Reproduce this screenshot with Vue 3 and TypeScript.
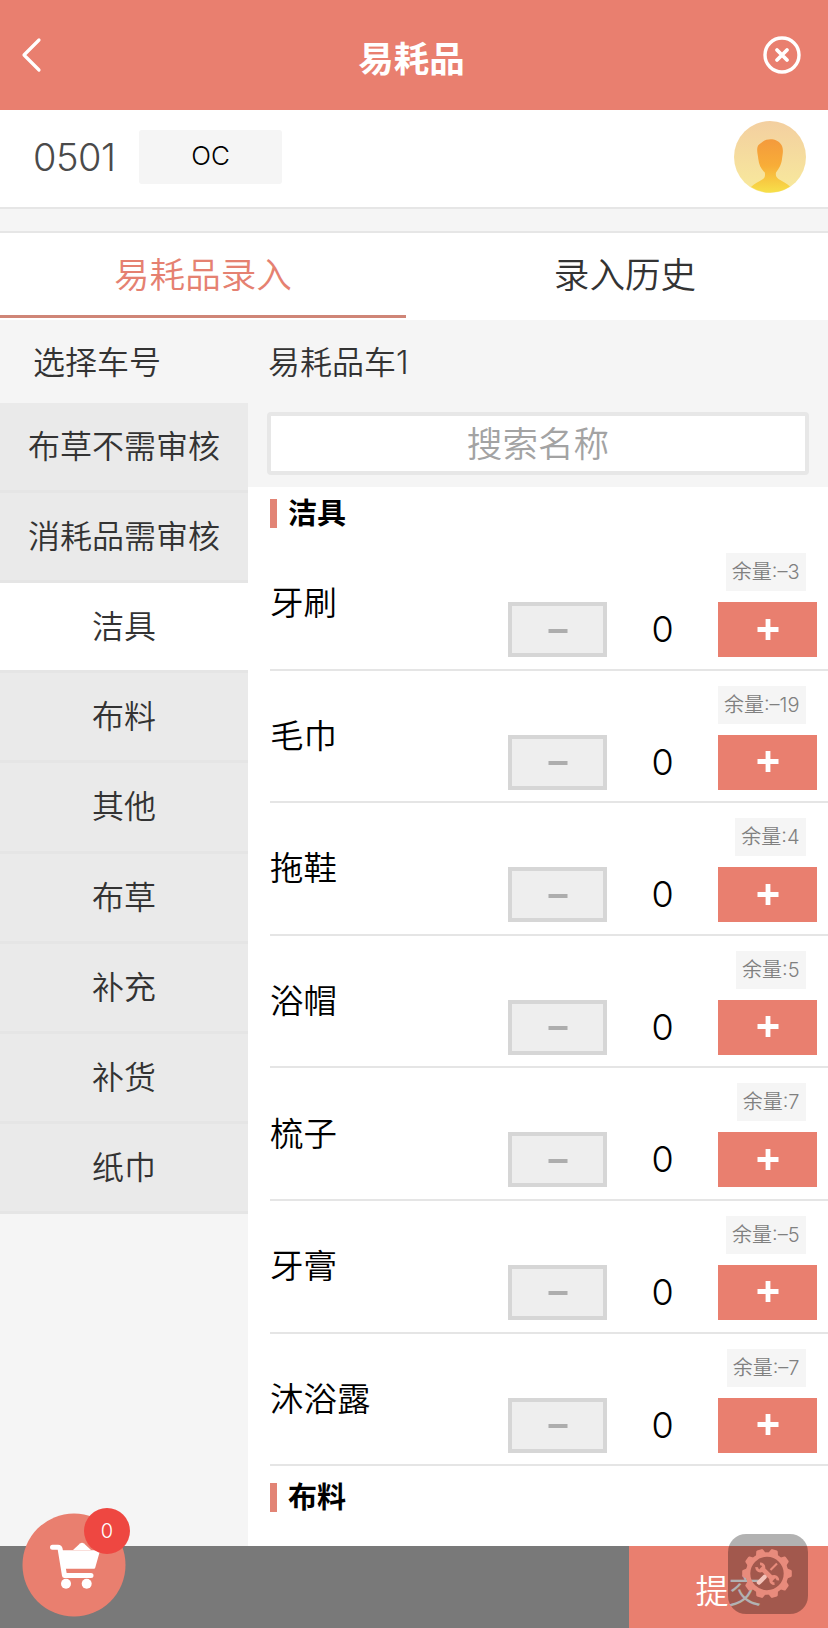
<script setup lang="ts">
import { ref } from 'vue'

interface Item {
  name: string
  stock: string
  count: number
}

const categories = ['布草不需审核', '消耗品需审核', '洁具', '布料', '其他', '布草', '补充', '补货', '纸巾']
const activeCategory = ref('洁具')
const keyword = ref('')
const items = ref<Item[]>([
  { name: '牙刷', stock: '–3', count: 0 },
  { name: '毛巾', stock: '–19', count: 0 },
  { name: '拖鞋', stock: '4', count: 0 },
  { name: '浴帽', stock: '5', count: 0 },
  { name: '梳子', stock: '7', count: 0 },
  { name: '牙膏', stock: '–5', count: 0 },
  { name: '沐浴露', stock: '–7', count: 0 },
])
const teeth = Array.from({ length: 10 }, (_, i) => 18 + i * 36)
</script>

<template>
  <div class="page">
    <header class="header">
      <svg class="back" width="24" height="40" viewBox="0 0 24 40">
        <path d="M20 5 5 20l15 15" fill="none" stroke="#fff" stroke-width="3.2" stroke-linecap="round" stroke-linejoin="round" />
      </svg>
      <h1 class="title">易耗品</h1>
      <svg class="close" width="40" height="40" viewBox="0 0 40 40">
        <circle cx="20" cy="20" r="17" fill="none" stroke="#fff" stroke-width="3.4" />
        <path d="m15 15 10 10M25 15 15 25" stroke="#fff" stroke-width="3.8" stroke-linecap="round" />
      </svg>
    </header>

    <section class="room">
      <span class="room-no">0501</span>
      <span class="room-state">OC</span>
      <svg class="avatar" width="72" height="72" viewBox="0 0 72 72">
        <defs>
          <linearGradient id="avatarBg" x1="0" y1="0" x2="0" y2="1">
            <stop offset="0" stop-color="#f3cfa0" />
            <stop offset="1" stop-color="#f8ea9c" />
          </linearGradient>
          <linearGradient id="avatarFg" x1="0" y1="0" x2="0" y2="1">
            <stop offset="0" stop-color="#f49a3c" />
            <stop offset="0.5" stop-color="#f8ad38" />
            <stop offset="1" stop-color="#f7e04a" />
          </linearGradient>
        </defs>
        <circle cx="36" cy="36" r="36" fill="url(#avatarBg)" />
        <path d="M23.500 26C24 23.500 27 22.500 29 20.500c5-4 15-3 18.500 3.500C50 29 48.500 33 48 38c-.7 6-3 9.500-6 13.500-.5 3 0 4.500 2.500 6.500 4 2.500 8 4 11.500 7.600a36 36 0 0 1-39 .4c3-3.500 8-5 12-8 2-1.500 2.300-3.500 1.800-6.500C27 48 25 44 24.300 38 24 34 22.500 30 23.500 26Z" fill="url(#avatarFg)" />
      </svg>
    </section>

    <nav class="tabs">
      <div class="tab active">易耗品录入</div>
      <div class="tab">录入历史</div>
    </nav>

    <div class="cart-row">
      <span class="cart-label">选择车号</span>
      <span class="cart-name">易耗品车1</span>
    </div>

    <div class="body">
      <aside class="side">
        <div v-for="c in categories" :key="c" class="cat" :class="{ on: c === activeCategory }" @click="activeCategory = c">{{ c }}</div>
      </aside>
      <main class="main">
        <div class="search">
          <input v-model="keyword" class="search-input" placeholder="搜索名称" />
        </div>
        <div class="list">
          <h2 class="group"><span>洁具</span></h2>
          <div v-for="item in items" :key="item.name" class="row">
            <span class="name">{{ item.name }}</span>
            <div class="controls">
              <span class="stock">余量:{{ item.stock }}</span>
              <div class="stepper">
                <button class="btn minus" @click="item.count = Math.max(0, item.count - 1)">
                  <svg width="20" height="20" viewBox="0 0 20 20"><path d="M.5 11h19" stroke="#adadad" stroke-width="4" /></svg>
                </button>
                <span class="count">{{ item.count }}</span>
                <button class="btn plus" @click="item.count++">
                  <svg width="22" height="22" viewBox="0 0 22 22"><path d="M.5 10.500h21M11 0v21" stroke="#fff" stroke-width="4.800" /></svg>
                </button>
              </div>
            </div>
          </div>
          <h2 class="group next"><span>布料</span></h2>
        </div>
      </main>
    </div>

    <footer class="footer">
      <button class="submit">提交</button>
      <div class="cart">
        <svg width="104" height="104" viewBox="0 0 104 104">
          <circle cx="52" cy="52" r="51.500" fill="#e97f6f" />
          <g fill="#fff">
            <path d="M51 37 58 30.500q2-1.500 4 0L69 37Z" />
            <path d="M38 38.500h38.500L72 54.500H41.500Z" stroke="#fff" stroke-width="2.500" stroke-linejoin="round" />
            <circle cx="44" cy="70.800" r="5" />
            <circle cx="64.700" cy="70.800" r="5" />
          </g>
          <path d="M30.500 34.300h5.500q1.800 0 2.200 2L42.500 62.500H69" fill="none" stroke="#fff" stroke-width="5" stroke-linecap="round" stroke-linejoin="round" />
        </svg>
        <span class="badge">0</span>
      </div>
      <div class="tool">
        <svg width="80" height="80" viewBox="0 0 80 80">
          <g fill="#e88b7c">
            <path v-for="a in teeth" :key="a" d="M33.500 20.500 35.500 15.500q.3-.8 1.200-.8h4.600q.9 0 1.200.8L44.500 20.500Z" :transform="`rotate(${a} 39 39.500)`" />
          </g>
          <circle cx="39" cy="39.500" r="19" fill="none" stroke="#e88b7c" stroke-width="4.600" />
          <path d="m33 33.500 12.500 12.500" stroke="#e88b7c" stroke-width="4.600" />
          <g fill="none" stroke="#e88b7c" stroke-width="2.800">
            <path d="M32 29.800a3.600 3.600 0 1 1-3.300 3.300" />
            <path d="M46.500 49.700a3.600 3.600 0 1 1 3.300-3.300" />
          </g>
          <path d="m49 29.500-6.500 6.500" stroke="#e88b7c" stroke-width="2.200" />
          <path d="m36.500 43-5.500 5.500" stroke="#f3c3ba" stroke-width="4.500" stroke-linecap="round" />
        </svg>
      </div>
    </footer>
  </div>
</template>

<style>
body { margin: 0; }
</style>

<style scoped>
.page {
  box-sizing: border-box;
  position: relative;
  display: flex;
  flex-direction: column;
  width: 828px;
  height: 1628px;
  overflow: hidden;
  background: #f5f5f5;
  color: #333;
  font-family: Inter, "Noto Sans CJK SC", sans-serif;
  font-weight: 350;
}
.page * { box-sizing: border-box; }
.header {
  flex: none;
  display: flex;
  align-items: center;
  justify-content: space-between;
  height: 110px;
  padding: 0 26px 0 19px;
  background: #e97f6f;
}
.title {
  margin: 2px 0 0 18px;
  color: #fff;
  font-size: 35.500px;
  font-weight: 600;
}
.room {
  flex: none;
  display: flex;
  align-items: center;
  height: 99px;
  padding: 0 22px 4px 33px;
  background: #fff;
  border-bottom: 2px solid #e6e6e6;
}
.room-no { width: 106px; font-size: 38px; font-weight: 300; letter-spacing: -0.500px; color: #4a4a4a; }
.room-state {
  width: 143px;
  height: 54px;
  line-height: 52px;
  background: #f5f5f5;
  border-radius: 3px;
  text-align: center;
  font-size: 26px;
  font-weight: 300;
  color: #000;
}
.avatar { margin-left: auto; }
.tabs {
  flex: none;
  display: flex;
  justify-content: space-between;
  height: 89px;
  margin-top: 22px;
  border-top: 2px solid #e6e6e6;
  background: #fff;
}
.tab {
  width: 406px;
  height: 85px;
  line-height: 85px;
  text-align: center;
  font-size: 35.600px;
}
.tab.active { color: #e58171; border-bottom: 3px solid #cf8577; }
.cart-row {
  flex: none;
  display: flex;
  align-items: center;
  height: 83px;
  padding: 0 0 3px 33px;
  font-size: 32px;
}
.cart-label { width: 235px; }
.body { flex: 1; display: flex; min-height: 0; }
.side {
  flex: none;
  width: 248px;
  height: 811px;
  display: grid;
  grid-template-rows: repeat(9, 1fr);
}
.cat {
  display: flex;
  align-items: center;
  justify-content: center;
  padding-bottom: 5px;
  border-bottom: 3px solid #e5e5e5;
  background: #eaeaea;
  font-size: 32px;
}
.cat.on { background: #fff; }
.main { flex: 1; display: flex; flex-direction: column; }
.search { flex: none; height: 84px; padding: 9px 19px 0 19px; }
.search-input {
  display: block;
  width: 100%;
  height: 63px;
  padding: 1px 0 0;
  border: 4px solid #e7e7e7;
  border-radius: 4px;
  outline: none;
  background: #fff;
  text-align: center;
  font: inherit;
  font-size: 35.600px;
}
.search-input::placeholder { color: #a3a3a3; }
.list { flex: 1; padding-left: 22px; background: #fff; }
.group {
  display: flex;
  align-items: center;
  gap: 11px;
  height: 51px;
  margin: 0;
  padding-top: 1px;
  color: #000;
  font-size: 29px;
  font-weight: 600;
}
.group span { padding-bottom: 4px; }
.group::before { content: ""; width: 7px; height: 29px; background: #e28475; }
.group.next { margin-top: 5px; }
.row {
  display: flex;
  justify-content: space-between;
  align-items: center;
  height: 132.600px;
  border-bottom: 2px solid #e5e5e5;
  color: #000;
}
.name { padding-bottom: 5px; font-size: 33.500px; }
.controls {
  align-self: flex-start;
  display: flex;
  flex-direction: column;
  width: 309px;
  margin-right: 11px;
  padding-top: 15px;
}
.stock {
  align-self: flex-end;
  height: 38px;
  line-height: 38px;
  margin: 0 11.500px 11px 0;
  padding: 0 6px;
  background: #f5f5f5;
  color: #808080;
  font-size: 20px;
}
.stepper { display: flex; align-items: center; justify-content: space-between; height: 55px; }
.btn {
  display: flex;
  align-items: center;
  justify-content: center;
  width: 99px;
  height: 55px;
  padding: 0;
  border: 0;
}
.minus { border: 4px solid #d6d6d6; background: #eee; }
.plus { background: #e97f6f; }
.count { padding-bottom: 1px; font-size: 36px; }
.footer {
  position: absolute;
  left: 0;
  right: 0;
  bottom: 0;
  display: flex;
  justify-content: flex-end;
  height: 82px;
  background: #797979;
}
.submit {
  width: 199px;
  height: 82px;
  padding: 3px 0 0;
  border: 0;
  background: #e97f6f;
  color: #fff;
  font: inherit;
  font-size: 33px;
}
.cart { position: absolute; left: 22px; top: -33px; height: 104px; }
.badge {
  position: absolute;
  left: 62px;
  top: -5px;
  width: 46px;
  height: 46px;
  line-height: 46px;
  border-radius: 50%;
  background: #ee4741;
  color: #fff;
  text-align: center;
  font-size: 20px;
}
.tool {
  position: absolute;
  left: 728px;
  top: -12px;
  width: 80px;
  height: 80px;
  border-radius: 18px;
  background: rgba(0, 0, 0, 0.3);
}
</style>
